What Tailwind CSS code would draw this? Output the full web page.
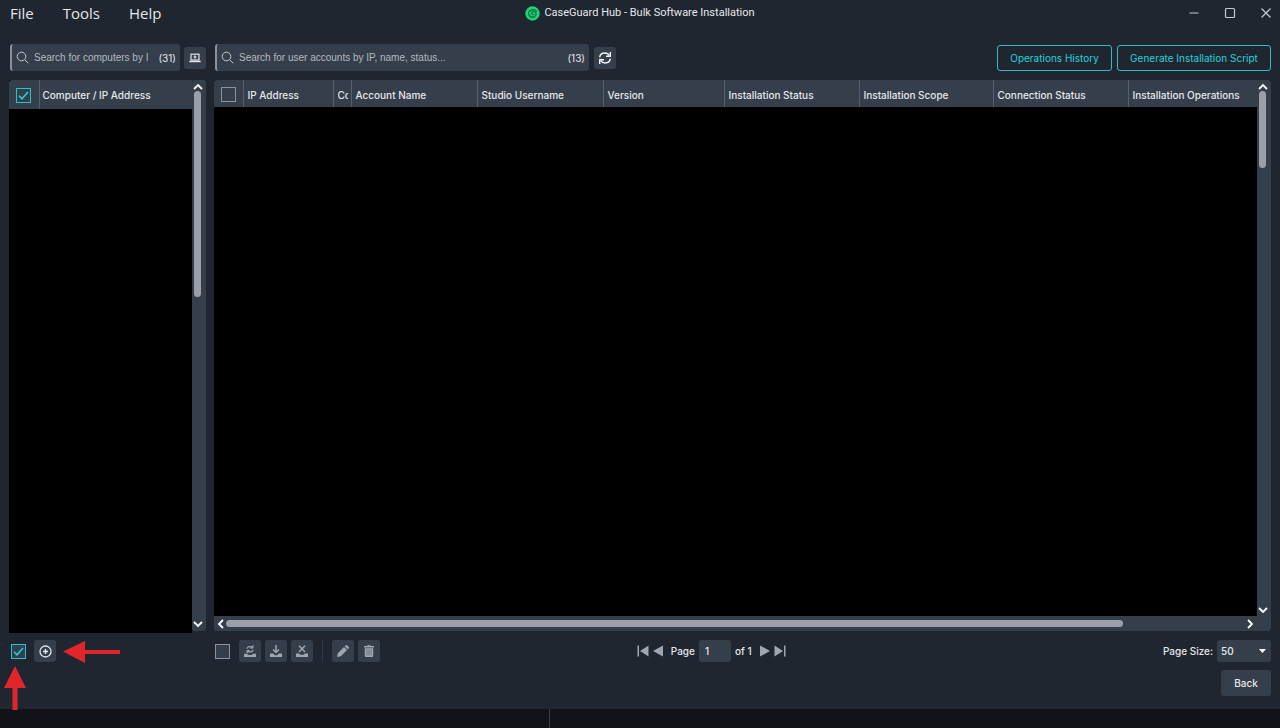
<!DOCTYPE html>
<html lang="en">
<head>
    <meta charset="UTF-8">
    <meta name="viewport" content="width=device-width, initial-scale=1.0">
    <title>CaseGuard Hub - Bulk Software Installation</title>
    <script src="https://cdn.jsdelivr.net/npm/@tailwindcss/browser@4"></script>
</head>
<body class="relative flex flex-col h-screen overflow-hidden bg-[#20262f] text-[#e4e7eb] font-[Inter,sans-serif] text-[10px] leading-4">

    <!-- Title bar -->
    <header class="grid grid-cols-[1fr_auto_1fr] items-center h-[26px] shrink-0 font-['Open_Sans',sans-serif]">
        <nav class="flex gap-[29px] pl-[10px] text-[15px] leading-5">
            <a href="#">File</a>
            <a href="#">Tools</a>
            <a href="#">Help</a>
        </nav>
        <div class="flex items-center gap-1">
            <svg class="size-[15px]" viewBox="0 0 15 15" fill="none">
                <circle cx="7.500" cy="7.500" r="7.200" fill="#1fd375"/>
                <path d="M11.500 5.200C9.500 2.700 4.200 3.200 3.700 6.500c-.4 2.600 2 4.800 4.600 4.400 2.300-.4 3.600-2.600 2.400-4.200-1.200-1.600-4-1-4 .7 0 1.200 1.300 1.700 2.200 1" stroke="#0b6b40" stroke-width="1.100" stroke-linecap="round"/>
                <path d="M5 5.800c1-1.200 2.600-1.500 4-.9M3.800 9.800c1.400 2 4 2.500 6 1.300" stroke="#0b6b40" stroke-width=".8"/>
            </svg>
            <h1 class="font-[Roboto,sans-serif] text-[11px] leading-4">CaseGuard Hub - Bulk Software Installation</h1>
        </div>
        <div class="flex justify-end gap-6 pr-2 text-[#c5c9ce]">
            <button aria-label="Minimize"><svg class="size-3" viewBox="0 0 12 12"><path d="M1.500 6h9" stroke="currentColor"/></svg></button>
            <button aria-label="Maximize"><svg class="size-3" viewBox="0 0 12 12"><rect x="1.500" y="1.500" width="9" height="9" rx="1" fill="none" stroke="currentColor" stroke-width="1.200"/></svg></button>
            <button aria-label="Close"><svg class="size-3" viewBox="0 0 12 12"><path d="M1.500 1.500l9 9M10.500 1.500l-9 9" stroke="currentColor" stroke-width="1.200"/></svg></button>
        </div>
    </header>

    <main class="flex flex-1 min-h-0 gap-2 px-[9px] pt-[18px]">

        <!-- Computers -->
        <section class="flex flex-col w-[197px] shrink-0">
            <div class="flex items-center gap-1 h-[27px] mb-[9px] pl-px">
                <div class="flex flex-1 min-w-0 items-center h-full rounded-[3px] border-l-2 border-[#8b929b] bg-[#353f4c] px-1">
                    <svg class="size-[13px] shrink-0 text-[#c5c9ce]" viewBox="0 0 13 13" fill="none" stroke="currentColor"><circle cx="5.500" cy="5.500" r="4.300"/><path d="M8.700 8.700l3.600 3.600"/></svg>
                    <input type="text" aria-label="Search for computers" placeholder="Search for computers by IP, name..." class="flex-1 min-w-0 ml-[5px] mr-[10px] font-['Liberation_Sans',sans-serif] outline-none placeholder:text-[#b3b8bf]">
                    <span>(31)</span>
                </div>
                <button aria-label="Add computer" class="flex items-center justify-center size-[22px] rounded-[3px] bg-[#353f4c]">
                    <svg class="size-3" viewBox="0 0 12 12" fill="none" stroke="#e4e7eb"><rect x="2" y="2.200" width="8" height="5.800" stroke-width="1.200"/><path d="M.3 9.500h11.400" stroke-width="1.400"/><path d="M6 3.500v3M4.500 5h3" stroke-width="1.200"/></svg>
                </button>
            </div>
            <div class="flex flex-1 min-h-0">
                <div class="flex-1 bg-black">
                    <table class="w-full table-fixed">
                        <thead>
                            <tr class="h-[29px] bg-[#353f4c] text-left *:pt-px">
                                <th class="w-[30px] border-r border-[#56606c] rounded-tl-[3px]">
                                    <label class="flex items-center justify-center">
                                        <input type="checkbox" checked aria-label="Select all computers" class="peer appearance-none size-[15px] border border-[#8b929b] checked:border-[#22c5cf]">
                                        <svg class="hidden peer-checked:block absolute size-[11px]" viewBox="0 0 11 11" fill="none" stroke="#22d3dd" stroke-width="1.500"><path d="M1 5.800l3 3L10 2"/></svg>
                                    </label>
                                </th>
                                <th class="pl-[3px] font-medium">Computer / IP Address</th>
                            </tr>
                        </thead>
                    </table>
                </div>
                <div class="flex flex-col items-center w-[14px] mb-[2px] py-[3px] pr-[3px] rounded-[3px] bg-[#353f4c]">
                    <svg class="w-[10px] h-2 shrink-0" viewBox="0 0 10 8" fill="none" stroke="#fff" stroke-width="1.800"><path d="M1 6l4-4 4 4"/></svg>
                    <div class="flex-1 w-full flex justify-center"><div class="w-[7px] h-[39%] rounded-full bg-[#9a9fa9]"></div></div>
                    <svg class="w-[10px] h-2 shrink-0" viewBox="0 0 10 8" fill="none" stroke="#fff" stroke-width="1.800"><path d="M1 2l4 4 4-4"/></svg>
                </div>
            </div>
            <div class="flex gap-2 h-[76px] pt-[7px] pl-px">
                <label class="flex items-center justify-center w-4 h-[22px]">
                    <input type="checkbox" checked aria-label="Select computers" class="peer appearance-none size-[15px] border border-[#8b929b] bg-[#353f4c] checked:border-[#22c5cf]">
                    <svg class="hidden peer-checked:block absolute size-[11px]" viewBox="0 0 11 11" fill="none" stroke="#22d3dd" stroke-width="1.500"><path d="M1 5.800l3 3L10 2"/></svg>
                </label>
                <button aria-label="Add" class="flex items-center justify-center size-[22px] rounded-[3px] bg-[#353f4c]">
                    <svg class="size-[13px]" viewBox="0 0 13 13" fill="none" stroke="#e4e7eb" stroke-width="1.300"><circle cx="6.500" cy="6.500" r="5.500"/><path d="M6.500 4v5M4 6.500h5" stroke-width="1.500"/></svg>
                </button>
            </div>
        </section>

        <!-- User accounts -->
        <section class="flex flex-col flex-1 min-w-0">
            <div class="flex items-center gap-[5px] h-[27px] mb-[9px] pl-px">
                <div class="flex w-[374px] items-center h-full rounded-[3px] border-l-2 border-[#8b929b] bg-[#353f4c] px-1">
                    <svg class="size-[13px] shrink-0 text-[#c5c9ce]" viewBox="0 0 13 13" fill="none" stroke="currentColor"><circle cx="5.500" cy="5.500" r="4.300"/><path d="M8.700 8.700l3.600 3.600"/></svg>
                    <input type="text" aria-label="Search for user accounts" placeholder="Search for user accounts by IP, name, status..." class="flex-1 min-w-0 ml-[5px] mr-[10px] font-['Liberation_Sans',sans-serif] outline-none placeholder:text-[#b3b8bf]">
                    <span>(13)</span>
                </div>
                <button aria-label="Refresh" class="flex items-center justify-center size-[22px] rounded-[3px] bg-[#353f4c]">
                    <svg class="size-[14px]" viewBox="0 0 14 14" fill="none" stroke="#f3f4f6" stroke-width="1.400"><path d="M1.700 6.300C2 3.700 4.200 2 6.800 2c2 0 3.700 1 4.700 2.600M12.300 7.700c-.3 2.600-2.500 4.300-5.100 4.300-2 0-3.700-1-4.700-2.600"/><path d="M12.300 1v4.300H8M1.700 13V8.700H6"/></svg>
                </button>
                <button class="ml-auto h-[26px] w-[115px] rounded-[3px] border border-[#35b9c4] text-[#22d3dd]">Operations History</button>
                <button class="h-[26px] w-[154px] rounded-[3px] border border-[#35b9c4] text-[#22d3dd]">Generate Installation Script</button>
            </div>
            <div class="flex flex-1 min-h-0 mb-[2px] rounded-[3px] overflow-hidden bg-[#353f4c]">
                <div class="flex flex-col flex-1 min-w-0">
                    <div class="flex-1 bg-black">
                        <table class="w-full table-fixed">
                            <thead>
                                <tr class="h-[27px] bg-[#353f4c] text-left whitespace-nowrap *:pt-[2px] *:font-medium *:overflow-hidden *:border-[#56606c] *:not-first:pl-1 *:not-last:border-r">
                                    <th class="w-[29px]">
                                        <label class="flex items-center justify-center">
                                            <input type="checkbox" aria-label="Select all accounts" class="appearance-none size-[15px] border border-[#8b929b]">
                                        </label>
                                    </th>
                                    <th class="w-[90px]">IP Address</th>
                                    <th class="w-[18px]"><div class="w-[10px] overflow-hidden">Co</div></th>
                                    <th class="w-[126px]">Account Name</th>
                                    <th class="w-[126px]">Studio Username</th>
                                    <th class="w-[121px]">Version</th>
                                    <th class="w-[135px]">Installation Status</th>
                                    <th class="w-[134px]">Installation Scope</th>
                                    <th class="w-[135px]">Connection Status</th>
                                    <th>Installation Operations</th>
                                </tr>
                            </thead>
                        </table>
                    </div>
                    <div class="flex items-center h-[15px] px-[3px]">
                        <svg class="w-2 h-[10px] shrink-0" viewBox="0 0 8 10" fill="none" stroke="#fff" stroke-width="1.800"><path d="M6 1L2 5l4 4"/></svg>
                        <div class="flex-1 px-px"><div class="w-[88%] h-[7px] rounded-full bg-[#9a9fa9]"></div></div>
                        <svg class="w-2 h-[10px] shrink-0" viewBox="0 0 8 10" fill="none" stroke="#fff" stroke-width="1.800"><path d="M2 1l4 4-4 4"/></svg>
                    </div>
                </div>
                <div class="flex flex-col items-center w-[14px] pt-[3px] pb-[17px] pr-[3px]">
                    <svg class="w-[10px] h-2 shrink-0" viewBox="0 0 10 8" fill="none" stroke="#fff" stroke-width="1.800"><path d="M1 6l4-4 4 4"/></svg>
                    <div class="flex-1 w-full flex justify-center"><div class="w-[7px] h-[15%] rounded-full bg-[#9a9fa9]"></div></div>
                    <svg class="w-[10px] h-2 shrink-0" viewBox="0 0 10 8" fill="none" stroke="#fff" stroke-width="1.800"><path d="M1 2l4 4 4-4"/></svg>
                </div>
            </div>
            <div class="flex flex-col h-[76px] pt-[7px] gap-2">
                <div class="flex items-center h-[22px]">
                    <div class="flex items-center gap-1 w-[40%] text-[#a0a6ae]">
                        <input type="checkbox" aria-label="Select accounts" class="appearance-none size-[15px] ml-px mr-[5px] border border-[#8b929b] bg-[#353f4c]">
                        <button aria-label="Update" class="flex items-center justify-center size-[22px] rounded-[3px] bg-[#353f4c]">
                            <svg class="size-3" viewBox="0 0 12 12" fill="none" stroke="currentColor" stroke-width="1.200"><path d="M3 3.700C3.400 1.500 6.600.700 8.300 2.500M9 4.800c-.4 2.200-3.600 3-5.300 1.200"/><path d="M8.800.3v2.600H6.200M3.200 8.200V5.600h2.600"/><path d="M0 8.700h3l1 1.200h4l1-1.200h3V12H0z" fill="currentColor" stroke="none"/></svg>
                        </button>
                        <button aria-label="Install" class="flex items-center justify-center size-[22px] rounded-[3px] bg-[#353f4c]">
                            <svg class="size-3" viewBox="0 0 12 12" fill="none" stroke="currentColor" stroke-width="1.500"><path d="M6 0v7M3 4.500l3 3 3-3"/><path d="M0 8.500h3l2 1.700h2l2-1.700h3V12H0z" fill="currentColor" stroke="none"/></svg>
                        </button>
                        <button aria-label="Uninstall" class="flex items-center justify-center size-[22px] rounded-[3px] bg-[#353f4c]">
                            <svg class="size-3" viewBox="0 0 12 12" fill="none" stroke="currentColor" stroke-width="1.500"><path d="M3 .8l6 6.200M9 .8L3 7"/><path d="M0 8.500h3l1.500 1.200h3L9 8.500h3V12H0z" fill="currentColor" stroke="none"/></svg>
                        </button>
                        <span class="w-px h-[22px] mx-[5px] bg-[#323943]"></span>
                        <button aria-label="Edit" class="flex items-center justify-center size-[22px] rounded-[3px] bg-[#353f4c]">
                            <svg class="size-3" viewBox="0 0 12 12" fill="currentColor"><path d="M0 12l.8-3.800L7 2l3 3-6.200 6.200zM7.700 1.300l.9-.9a1.200 1.200 0 011.600 0l1.400 1.400a1.200 1.200 0 010 1.600l-.9.900z"/></svg>
                        </button>
                        <button aria-label="Delete" class="flex items-center justify-center size-[22px] rounded-[3px] bg-[#353f4c]">
                            <svg class="size-3" viewBox="0 0 12 12" fill="currentColor"><path d="M1 1h3L4.500.2h3L8 1h3v1.400H1zM1.800 3.200h8.400V11a1 1 0 01-1 1H2.800a1 1 0 01-1-1z"/><path d="M4 4.500v6M6 4.500v6M8 4.500v6" stroke="#353f4c" stroke-width=".5"/></svg>
                        </button>
                    </div>
                    <div class="flex items-center gap-1 text-[#a0a6ae]">
                        <button aria-label="First page"><svg class="size-3" viewBox="0 0 12 12" fill="currentColor"><path d="M.5.500h1.500v11H.5zM11.500.500v11L3 6z"/></svg></button>
                        <button aria-label="Previous page"><svg class="w-[10px] h-3" viewBox="0 0 10 12" fill="currentColor"><path d="M10 .5v11L0 6z"/></svg></button>
                        <label for="page" class="ml-1 font-medium text-[#e4e7eb]">Page</label>
                        <input id="page" type="text" value="1" class="w-8 h-[22px] rounded-[3px] bg-[#353f4c] pl-[6px] text-[#e4e7eb] font-medium outline-none">
                        <span class="font-medium text-[#e4e7eb] mr-1">of 1</span>
                        <button aria-label="Next page"><svg class="w-[10px] h-3" viewBox="0 0 10 12" fill="currentColor"><path d="M0 .5v11L10 6z"/></svg></button>
                        <button aria-label="Last page"><svg class="size-3" viewBox="0 0 12 12" fill="currentColor"><path d="M10 .5h1.500v11H10zM.5.500v11L9 6z"/></svg></button>
                    </div>
                    <div class="flex items-center gap-1 ml-auto">
                        <label for="page-size" class="font-medium">Page Size:</label>
                        <div class="relative">
                            <select id="page-size" class="appearance-none block w-[54px] h-[22px] rounded-[3px] bg-[#353f4c] pl-1 font-medium">
                                <option>50</option>
                                <option>100</option>
                            </select>
                            <svg class="absolute right-[5px] top-[9px] w-[7px] h-1 pointer-events-none" viewBox="0 0 7 4" fill="#fff"><path d="M0 0h7L3.500 4z"/></svg>
                        </div>
                    </div>
                </div>
                <button class="self-end w-[50px] h-[26px] rounded-[3px] bg-[#353f4c] font-medium">Back</button>
            </div>
        </section>
    </main>

    <!-- Status bar -->
    <footer class="flex h-[19px] shrink-0 bg-[#111318]">
        <div class="w-[43%] border-r border-[#3a3f47]"></div>
    </footer>

    <!-- Callout arrows -->
    <svg class="absolute left-[63px] bottom-[65px] w-[58px] h-[22px]" viewBox="0 0 58 22" fill="#e0262b"><path d="M0 10.500L22 0v9h35v4H22v9z"/></svg>
    <svg class="absolute left-1 bottom-[18px] w-[22px] h-[44px]" viewBox="0 0 22 44" fill="#e0262b"><path d="M11 0l11 22h-8.500v22h-5V22H0z"/></svg>

</body>
</html>
